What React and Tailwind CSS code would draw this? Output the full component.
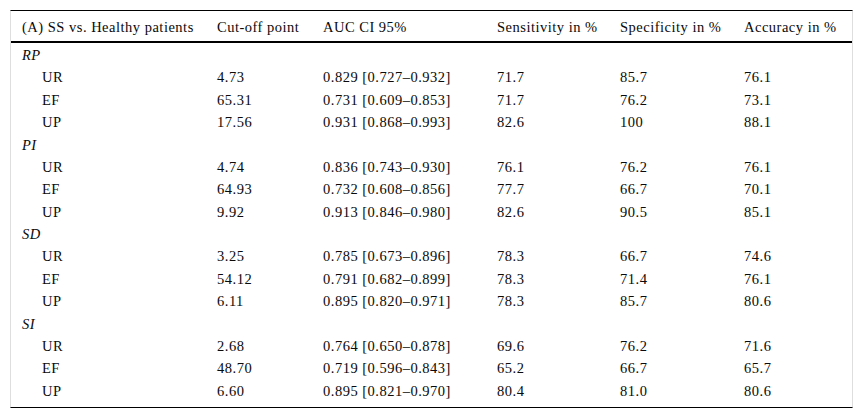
import React from "react";

const sections = [
  {
    name: "RP",
    rows: [
      ["UR", "4.73", "0.829 [0.727–0.932]", "71.7", "85.7", "76.1"],
      ["EF", "65.31", "0.731 [0.609–0.853]", "71.7", "76.2", "73.1"],
      ["UP", "17.56", "0.931 [0.868–0.993]", "82.6", "100", "88.1"],
    ],
  },
  {
    name: "PI",
    rows: [
      ["UR", "4.74", "0.836 [0.743–0.930]", "76.1", "76.2", "76.1"],
      ["EF", "64.93", "0.732 [0.608–0.856]", "77.7", "66.7", "70.1"],
      ["UP", "9.92", "0.913 [0.846–0.980]", "82.6", "90.5", "85.1"],
    ],
  },
  {
    name: "SD",
    rows: [
      ["UR", "3.25", "0.785 [0.673–0.896]", "78.3", "66.7", "74.6"],
      ["EF", "54.12", "0.791 [0.682–0.899]", "78.3", "71.4", "76.1"],
      ["UP", "6.11", "0.895 [0.820–0.971]", "78.3", "85.7", "80.6"],
    ],
  },
  {
    name: "SI",
    rows: [
      ["UR", "2.68", "0.764 [0.650–0.878]", "69.6", "76.2", "71.6"],
      ["EF", "48.70", "0.719 [0.596–0.843]", "65.2", "66.7", "65.7"],
      ["UP", "6.60", "0.895 [0.821–0.970]", "80.4", "81.0", "80.6"],
    ],
  },
];

const headers = [
  "(A) SS vs. Healthy patients",
  "Cut-off point",
  "AUC CI 95%",
  "Sensitivity in %",
  "Specificity in %",
  "Accuracy in %",
];

const cols = "grid grid-cols-[195px_106px_174px_123px_124px_119px] items-center";

export default function App() {
  return (
    <div
      className="w-[863px] h-[419px] bg-white pt-[10px] pl-[10px] text-[#0a0a0a]"
      style={{ fontFamily: '"Liberation Serif", "Times New Roman", serif' }}
    >
      <div className="w-[843px] border-x border-x-[#dedede] border-t border-t-black border-b-[1.5px] border-b-black text-[14.5px] tracking-[0.5px] leading-none">
        <div className={cols + " h-[32px] border-b-2 border-black"}>
          {headers.map((h) => (
            <div key={h} className="pl-[11px] whitespace-nowrap pt-[3px]">
              {h}
            </div>
          ))}
        </div>
        <div className="pt-[1px] pb-[5px]">
          {sections.map((s) => (
            <React.Fragment key={s.name}>
              <div className={cols + " h-[22.4px]"}>
                <div className="pl-[11px] italic">{s.name}</div>
              </div>
              {s.rows.map((r, i) => (
                <div key={i} className={cols + " h-[22.4px]"}>
                  {r.map((c, j) => (
                    <div
                      key={j}
                      className={(j === 0 ? "pl-[31px]" : "pl-[11px]") + " whitespace-nowrap"}
                    >
                      {c}
                    </div>
                  ))}
                </div>
              ))}
            </React.Fragment>
          ))}
        </div>
      </div>
    </div>
  );
}
